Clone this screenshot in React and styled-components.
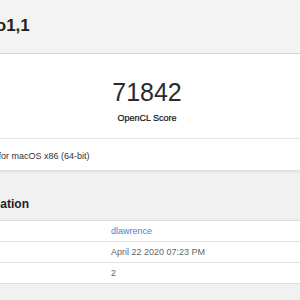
import styled, { createGlobalStyle } from 'styled-components'

const GlobalStyle = createGlobalStyle`
  body {
    margin: 0;
    background: #f1f1f1;
    font-family: "Liberation Sans", Arial, sans-serif;
    overflow: hidden;
  }
`

const Page = styled.div`
  margin-left: -200px;
  width: 694px;
`

const Header = styled.header`
  height: 54px;
  box-sizing: border-box;
  padding: 16px 0 0 140px;
  background: #f3f3f3;
  border-bottom: 1px solid #d9d9d9;
`

const Title = styled.h1`
  margin: 0;
  font-size: 17px;
  line-height: 20px;
  font-weight: bold;
  color: #222;
`

const Card = styled.section`
  background: #fff;
  border-top: ${(p) => (p.$bordered ? '1px solid #dedede' : 'none')};
  border-bottom: 1px solid #dedede;
  box-shadow: 0 1px 3px rgba(0, 0, 0, 0.08);
`

const ScoreBlock = styled.div`
  height: 85px;
  box-sizing: border-box;
  padding-top: 26px;
  text-align: center;
  border-bottom: 1px solid #e4e4e4;
`

const ScoreValue = styled.div`
  font-size: 25px;
  line-height: 25px;
  color: #2b2b2b;
`

const ScoreLabel = styled.div`
  margin-top: 8px;
  font-size: 9px;
  line-height: 11px;
  color: #111;
  -webkit-text-stroke: 0.2px #111;
`

const CardFooter = styled.div`
  height: 31px;
  box-sizing: border-box;
  padding: 3px 0 0 100px;
  line-height: 28px;
  font-size: 9px;
  color: #333;
`

const SectionTitle = styled.h2`
  margin: 26px 0 9px;
  padding-left: 123px;
  font-size: 12px;
  line-height: 14px;
  font-weight: bold;
  color: #222;
`

const Row = styled.div`
  display: grid;
  grid-template-columns: 300px 1fr;
  height: 20px;
  line-height: 20px;
  font-size: 9px;
  color: #666;
  & + & {
    border-top: 1px solid #e3e3e3;
  }
`

const Label = styled.div`
  padding-left: 140px;
  color: #333;
`

const Value = styled.div`
  padding-left: 11px;
  color: ${(p) => (p.$link ? '#3f82cf' : '#666')};
`

const info = [
  { label: 'Uploaded By', value: 'dlawrence', link: true },
  { label: 'Upload Date', value: 'April 22 2020 07:23 PM' },
  { label: 'Views', value: '2' },
]

const App = () => (
  <>
    <GlobalStyle />
    <Page>
      <Header>
        <Title>iMacPro1,1</Title>
      </Header>
      <Card>
        <ScoreBlock>
          <ScoreValue>71842</ScoreValue>
          <ScoreLabel>OpenCL Score</ScoreLabel>
        </ScoreBlock>
        <CardFooter>Geekbench 5.1.0 Tryout for macOS x86 (64-bit)</CardFooter>
      </Card>
      <SectionTitle>Result Information</SectionTitle>
      <Card $bordered>
        {info.map((row) => (
          <Row key={row.label}>
            <Label>{row.label}</Label>
            <Value $link={row.link}>{row.value}</Value>
          </Row>
        ))}
      </Card>
    </Page>
  </>
)

export default App
